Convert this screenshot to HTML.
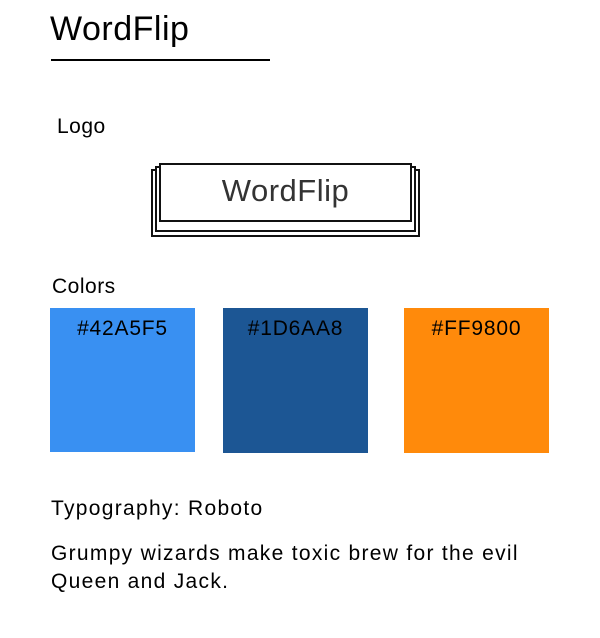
<!DOCTYPE html>
<html><head><style>
body{margin:0;width:600px;height:638px;background:#fff;font-family:"Liberation Sans",Roboto,sans-serif;color:#000;position:relative;overflow:hidden}
.a{position:absolute;white-space:nowrap}
.sw{position:absolute;width:145px;height:145px;top:308px}
.sw span{position:absolute;top:9px;width:100%;text-align:center;font-size:21px;letter-spacing:0.8px}
.b{position:absolute;border:2px solid #111;background:#fff;box-sizing:border-box}
</style></head><body>
<div class="a" style="left:50px;top:10px;font-size:34px;letter-spacing:0.5px">WordFlip</div>
<div class="a" style="left:51px;top:59px;width:219px;height:2px;background:#000"></div>
<div class="a" style="left:57px;top:115px;font-size:21px;letter-spacing:0.5px">Logo</div>
<div class="b" style="left:151px;top:169px;width:269px;height:68px"></div>
<div class="b" style="left:155px;top:166px;width:261px;height:66px"></div>
<div class="b" style="left:159px;top:163px;width:253px;height:59px"></div>
<div class="a" style="left:159px;top:173px;width:253px;text-align:center;font-size:31px;color:#333;letter-spacing:0.5px">WordFlip</div>
<div class="a" style="left:52px;top:275px;font-size:21px;letter-spacing:0.5px">Colors</div>
<div class="sw" style="left:50px;background:#3990F2;height:144px"><span>#42A5F5</span></div>
<div class="sw" style="left:223px;background:#1C5694"><span>#1D6AA8</span></div>
<div class="sw" style="left:404px;background:#FF8A0B"><span>#FF9800</span></div>
<div class="a" style="left:51px;top:497px;font-size:21px;letter-spacing:1.3px">Typography: Roboto</div>
<div class="a" style="left:51px;top:540px;font-size:21px;line-height:28px;letter-spacing:1.3px">Grumpy wizards make toxic brew for the evil<br>Queen and Jack.</div>
</body></html>
